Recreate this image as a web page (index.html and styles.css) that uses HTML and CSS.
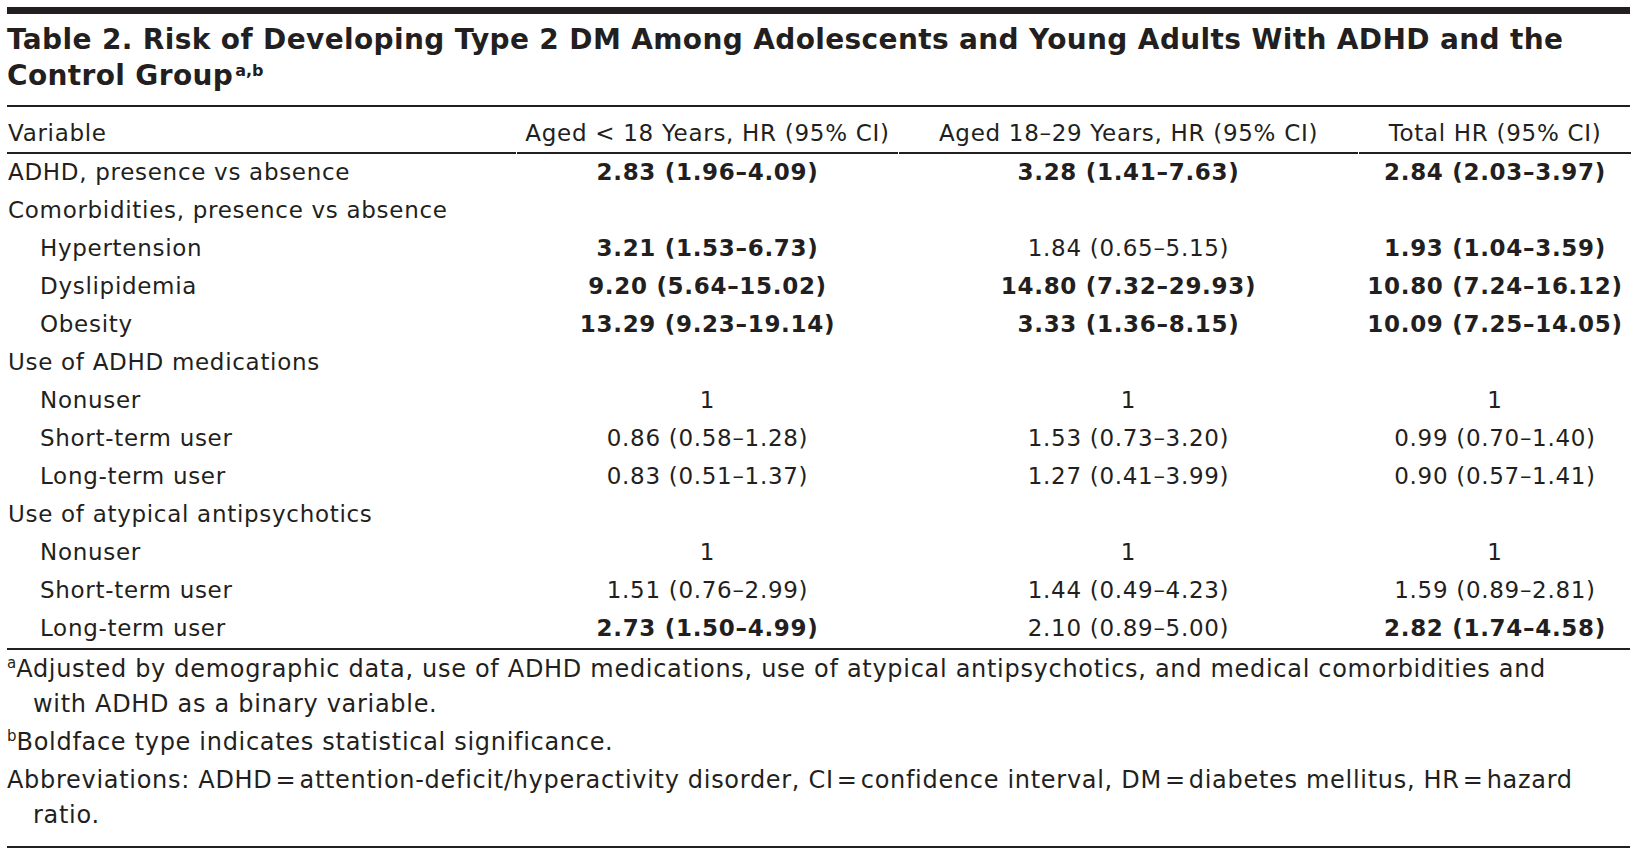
FILE: index.html
```html
<!DOCTYPE html>
<html lang="en">
<head>
<meta charset="utf-8">
<title>Table 2</title>
<link rel="stylesheet" href="styles.css">
</head>
<body>
<div class="page">
  <div class="topbar"></div>
  <h1 class="title">Table 2. Risk of Developing Type 2 DM Among Adolescents and Young Adults With ADHD and the Control Group<sup class="title-sup">a,b</sup></h1>
  <table class="data">
    <thead>
      <tr>
        <th class="c-var">Variable</th>
        <th class="c-one">Aged &lt; 18 Years, HR (95% CI)</th>
        <th class="c-two">Aged 18–29 Years, HR (95% CI)</th>
        <th class="c-tot">Total HR (95% CI)</th>
      </tr>
    </thead>
    <tbody>
      <tr><td class="lbl">ADHD, presence vs absence</td><td><b>2.83 (1.96–4.09)</b></td><td><b>3.28 (1.41–7.63)</b></td><td><b>2.84 (2.03–3.97)</b></td></tr>
      <tr><td class="lbl">Comorbidities, presence vs absence</td><td></td><td></td><td></td></tr>
      <tr><td class="lbl sub">Hypertension</td><td><b>3.21 (1.53–6.73)</b></td><td>1.84 (0.65–5.15)</td><td><b>1.93 (1.04–3.59)</b></td></tr>
      <tr><td class="lbl sub">Dyslipidemia</td><td><b>9.20 (5.64–15.02)</b></td><td><b>14.80 (7.32–29.93)</b></td><td><b>10.80 (7.24–16.12)</b></td></tr>
      <tr><td class="lbl sub">Obesity</td><td><b>13.29 (9.23–19.14)</b></td><td><b>3.33 (1.36–8.15)</b></td><td><b>10.09 (7.25–14.05)</b></td></tr>
      <tr><td class="lbl">Use of ADHD medications</td><td></td><td></td><td></td></tr>
      <tr><td class="lbl sub">Nonuser</td><td>1</td><td>1</td><td>1</td></tr>
      <tr><td class="lbl sub">Short-term user</td><td>0.86 (0.58–1.28)</td><td>1.53 (0.73–3.20)</td><td>0.99 (0.70–1.40)</td></tr>
      <tr><td class="lbl sub">Long-term user</td><td>0.83 (0.51–1.37)</td><td>1.27 (0.41–3.99)</td><td>0.90 (0.57–1.41)</td></tr>
      <tr><td class="lbl">Use of atypical antipsychotics</td><td></td><td></td><td></td></tr>
      <tr><td class="lbl sub">Nonuser</td><td>1</td><td>1</td><td>1</td></tr>
      <tr><td class="lbl sub">Short-term user</td><td>1.51 (0.76–2.99)</td><td>1.44 (0.49–4.23)</td><td>1.59 (0.89–2.81)</td></tr>
      <tr><td class="lbl sub">Long-term user</td><td><b>2.73 (1.50–4.99)</b></td><td>2.10 (0.89–5.00)</td><td><b>2.82 (1.74–4.58)</b></td></tr>
    </tbody>
  </table>
  <div class="notes">
    <p class="note"><sup class="note-sup">a</sup>Adjusted by demographic data, use of ADHD medications, use of atypical antipsychotics, and medical comorbidities and with ADHD as a binary variable.</p>
    <p class="note"><sup class="note-sup">b</sup>Boldface type indicates statistical significance.</p>
    <p class="note">Abbreviations: ADHD&#8202;=&#8202;attention-deficit/hyperactivity disorder, CI&#8202;=&#8202;confidence interval, DM&#8202;=&#8202;diabetes mellitus, HR&#8202;=&#8202;hazard ratio.</p>
  </div>
</div>
</body>
</html>
```

FILE: styles.css
```css
html, body {
  margin: 0;
  padding: 0;
  background: #ffffff;
}

body {
  color: #231f20;
  font-family: "DejaVu Sans", "Open Sans", sans-serif;
}

.page {
  padding: 0 6px 0 7px;
}

.topbar {
  margin-top: 7px;
  height: 7px;
  background: #231f20;
}

.title {
  margin: 0;
  padding: 8px 0 11px;
  font-size: 28px;
  line-height: 36px;
  font-weight: 700;
  letter-spacing: 0.36px;
  border-bottom: 2px solid #231f20;
}

.title-sup {
  display: inline-block;
  margin-left: 2px;
  font-size: 16px;
  line-height: 16px;
  vertical-align: 9px;
  letter-spacing: 0;
}

.data {
  width: calc(100% + 2px);
  margin-left: -1px;
  border-collapse: separate;
  border-spacing: 1px 0;
  table-layout: fixed;
  font-size: 23px;
  letter-spacing: 0.7px;
}

.data th {
  font-weight: 400;
  text-align: center;
  padding: 7px 0 0;
  line-height: 38px;
  border-bottom: 2px solid #231f20;
  white-space: nowrap;
}

.data th.c-var {
  text-align: left;
  padding-left: 1px;
  width: 508px;
}

.data th.c-one { width: 381px; }
.data th.c-two { width: 459px; }
.data th.c-tot { width: 272px; }

.data td {
  text-align: center;
  padding: 0 0 2px;
  line-height: 36px;
  white-space: nowrap;
}

.data td.lbl {
  text-align: left;
  padding-left: 1px;
}

.data td.sub {
  padding-left: 33px;
}

.data b {
  font-weight: 700;
}

.notes {
  border-top: 2px solid #231f20;
  border-bottom: 2px solid #231f20;
  padding: 2px 40px 13px 0;
  font-size: 24px;
  line-height: 35px;
  letter-spacing: 0.7px;
}

.note {
  margin: 3px 0 0;
  padding-left: 26px;
  text-indent: -26px;
}

.note:first-child {
  margin-top: 0;
}

.note-sup {
  font-size: 15px;
  line-height: 0;
  vertical-align: 9px;
  letter-spacing: 0;
}
```
